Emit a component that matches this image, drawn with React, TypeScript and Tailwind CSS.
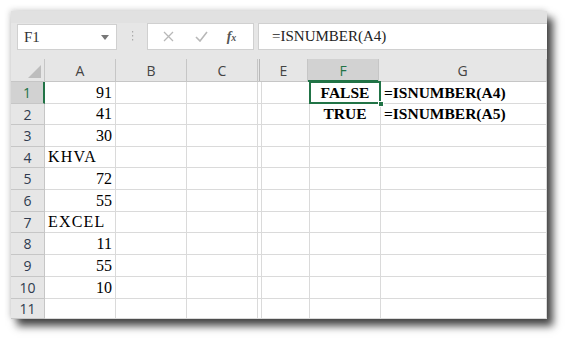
import React from "react";

const colW = [34, 71, 71, 71, 2, 48, 71, 168];
const rowH = [22, 21, 22, 21, 22, 22, 21, 22, 22, 22, 20];

type Cell = { t: string; align?: "r" | "l" | "c"; bold?: boolean; wide?: boolean };
const data: Record<number, Record<number, Cell>> = {
  0: { 1: { t: "91", align: "r" }, 6: { t: "FALSE", align: "c", bold: true }, 7: { t: "=ISNUMBER(A4)", align: "l", bold: true } },
  1: { 1: { t: "41", align: "r" }, 6: { t: "TRUE", align: "c", bold: true }, 7: { t: "=ISNUMBER(A5)", align: "l", bold: true } },
  2: { 1: { t: "30", align: "r" } },
  3: { 1: { t: "KHVA", align: "l", wide: true } },
  4: { 1: { t: "72", align: "r" } },
  5: { 1: { t: "55", align: "r" } },
  6: { 1: { t: "EXCEL", align: "l", wide: true } },
  7: { 1: { t: "11", align: "r" } },
  8: { 1: { t: "55", align: "r" } },
  9: { 1: { t: "10", align: "r" } },
};

const headers = ["", "A", "B", "C", "", "E", "F", "G"];
const serif = { fontFamily: '"Liberation Serif", "Times New Roman", serif' };
const sans = { fontFamily: '"Open Sans", "Liberation Sans", Arial, sans-serif' };

export default function App() {
  return (
    <div className="w-[567px] h-[339px] bg-white pt-[11px] pl-[11px] overflow-hidden">
      <div className="w-[536px] h-[308px] bg-[#e6e6e6] flex flex-col overflow-hidden shadow-[6px_7px_8px_rgba(0,0,0,0.72),-1px_-1px_6px_rgba(0,0,0,0.18)]">
        <div className="h-[12px] bg-[#e1e1e1] shrink-0" />
        {/* toolbar */}
        <div className="h-[27px] flex items-stretch shrink-0">
          <div className="ml-[6px] w-[100px] mt-[1px] bg-white border border-[#d0d0d0] flex items-center justify-between pl-[6px] pr-[7px]">
            <span className="text-[15px] text-[#333]" style={serif}>F1</span>
            <svg width="8" height="5" viewBox="0 0 8 5"><path d="M0 0 L8 0 L4 5 Z" fill="#777" /></svg>
          </div>
          <div className="w-[30px] flex items-center justify-center">
            <svg width="3" height="12" viewBox="0 0 3 12">
              <rect x="1" y="0" width="1.2" height="1.5" fill="#aaa" />
              <rect x="1" y="4" width="1.2" height="1.5" fill="#aaa" />
              <rect x="1" y="8" width="1.2" height="1.5" fill="#aaa" />
            </svg>
          </div>
          <div className="w-[107px] bg-white border border-[#d0d0d0] flex items-center">
            <div className="w-[40px] flex justify-center">
              <svg width="11" height="11" viewBox="0 0 11 11"><path d="M1 1 L10 10 M10 1 L1 10" stroke="#b8b8b8" strokeWidth="1.3" /></svg>
            </div>
            <div className="w-[26px] flex justify-center">
              <svg width="13" height="11" viewBox="0 0 13 11"><path d="M1 6 L5 10 L12 1" stroke="#b8b8b8" strokeWidth="1.6" fill="none" /></svg>
            </div>
            <div className="flex-1 flex justify-center pr-[4px]">
              <span className="italic font-bold text-[14px] text-[#555] leading-none" style={serif}>f<span className="text-[10px]">x</span></span>
            </div>
          </div>
          <div className="ml-[4px] flex-1 bg-white border-y border-l border-[#d0d0d0] flex items-center pl-[13px]">
            <span className="text-[15px] text-[#222]" style={serif}>=ISNUMBER(A4)</span>
          </div>
        </div>
        <div className="h-[9px] shrink-0" />
        {/* header row */}
        <div className="h-[23px] flex shrink-0 border-b border-[#c6c6c6]">
          {colW.map((w, i) => {
            const sel = i === 6;
            return (
              <div
                key={i}
                style={{ width: w }}
                className={`shrink-0 relative flex items-center justify-center border-r ${i === 4 ? "border-[#b8b8b8]" : "border-[#c6c6c6]"} ${sel ? "bg-[#d2d2d2] text-[#217346]" : "text-[#444]"}`}
              >
                {i === 0 && (
                  <svg className="absolute right-[3px] bottom-[3px]" width="13" height="13" viewBox="0 0 13 13"><path d="M13 0 L13 13 L0 13 Z" fill="#bdbdbd" /></svg>
                )}
                <span className="text-[14px]" style={sans}>{headers[i]}</span>
                {sel && <div className="absolute left-0 right-0 bottom-[-1px] h-[2px] bg-[#217346]" />}
              </div>
            );
          })}
        </div>
        {/* rows */}
        <div className="flex-1 bg-white flex flex-col">
          {rowH.map((h, r) => (
            <div key={r} className="flex shrink-0" style={{ height: h }}>
              {colW.map((w, c) => {
                if (c === 0) {
                  const sel = r === 0;
                  return (
                    <div
                      key={c}
                      style={{ width: w }}
                      className={`shrink-0 relative flex items-center justify-center border-b border-r ${sel ? "bg-[#d2d2d2] text-[#217346] border-r-[#217346] border-r-2" : "bg-[#e6e6e6] text-[#2f3b4f] border-r-[#c6c6c6]"} border-b-[#c6c6c6]`}
                    >
                      <span className="text-[14px]" style={sans}>{r + 1}</span>
                    </div>
                  );
                }
                const cell = data[r]?.[c];
                const selected = r === 0 && c === 6;
                return (
                  <div
                    key={c}
                    style={{ width: w }}
                    className={`shrink-0 relative flex items-center border-b border-r border-[#dadada] ${cell?.align === "r" ? "justify-end pr-[3px]" : cell?.align === "c" ? "justify-center" : "justify-start pl-[3px]"} ${c === 7 ? "flex-1" : ""} ${selected ? "z-10" : ""}`}
                  >
                    {cell && (
                      <span
                        className={`text-black whitespace-nowrap ${cell.bold ? "font-bold text-[15.5px]" : "text-[16px]"} ${cell.wide ? "tracking-[1.2px] text-[14px]" : ""}`}
                        style={serif}
                      >
                        {cell.t}
                      </span>
                    )}
                    {selected && (
                      <>
                        <div className="absolute left-[-1px] top-[-1px] right-[-1px] bottom-[-1px] border-2 border-[#217346] pointer-events-none" />
                        <div className="absolute right-[-4px] bottom-[-4px] w-[6px] h-[6px] bg-[#217346] border border-white" />
                      </>
                    )}
                  </div>
                );
              })}
            </div>
          ))}
        </div>
      </div>
    </div>
  );
}
